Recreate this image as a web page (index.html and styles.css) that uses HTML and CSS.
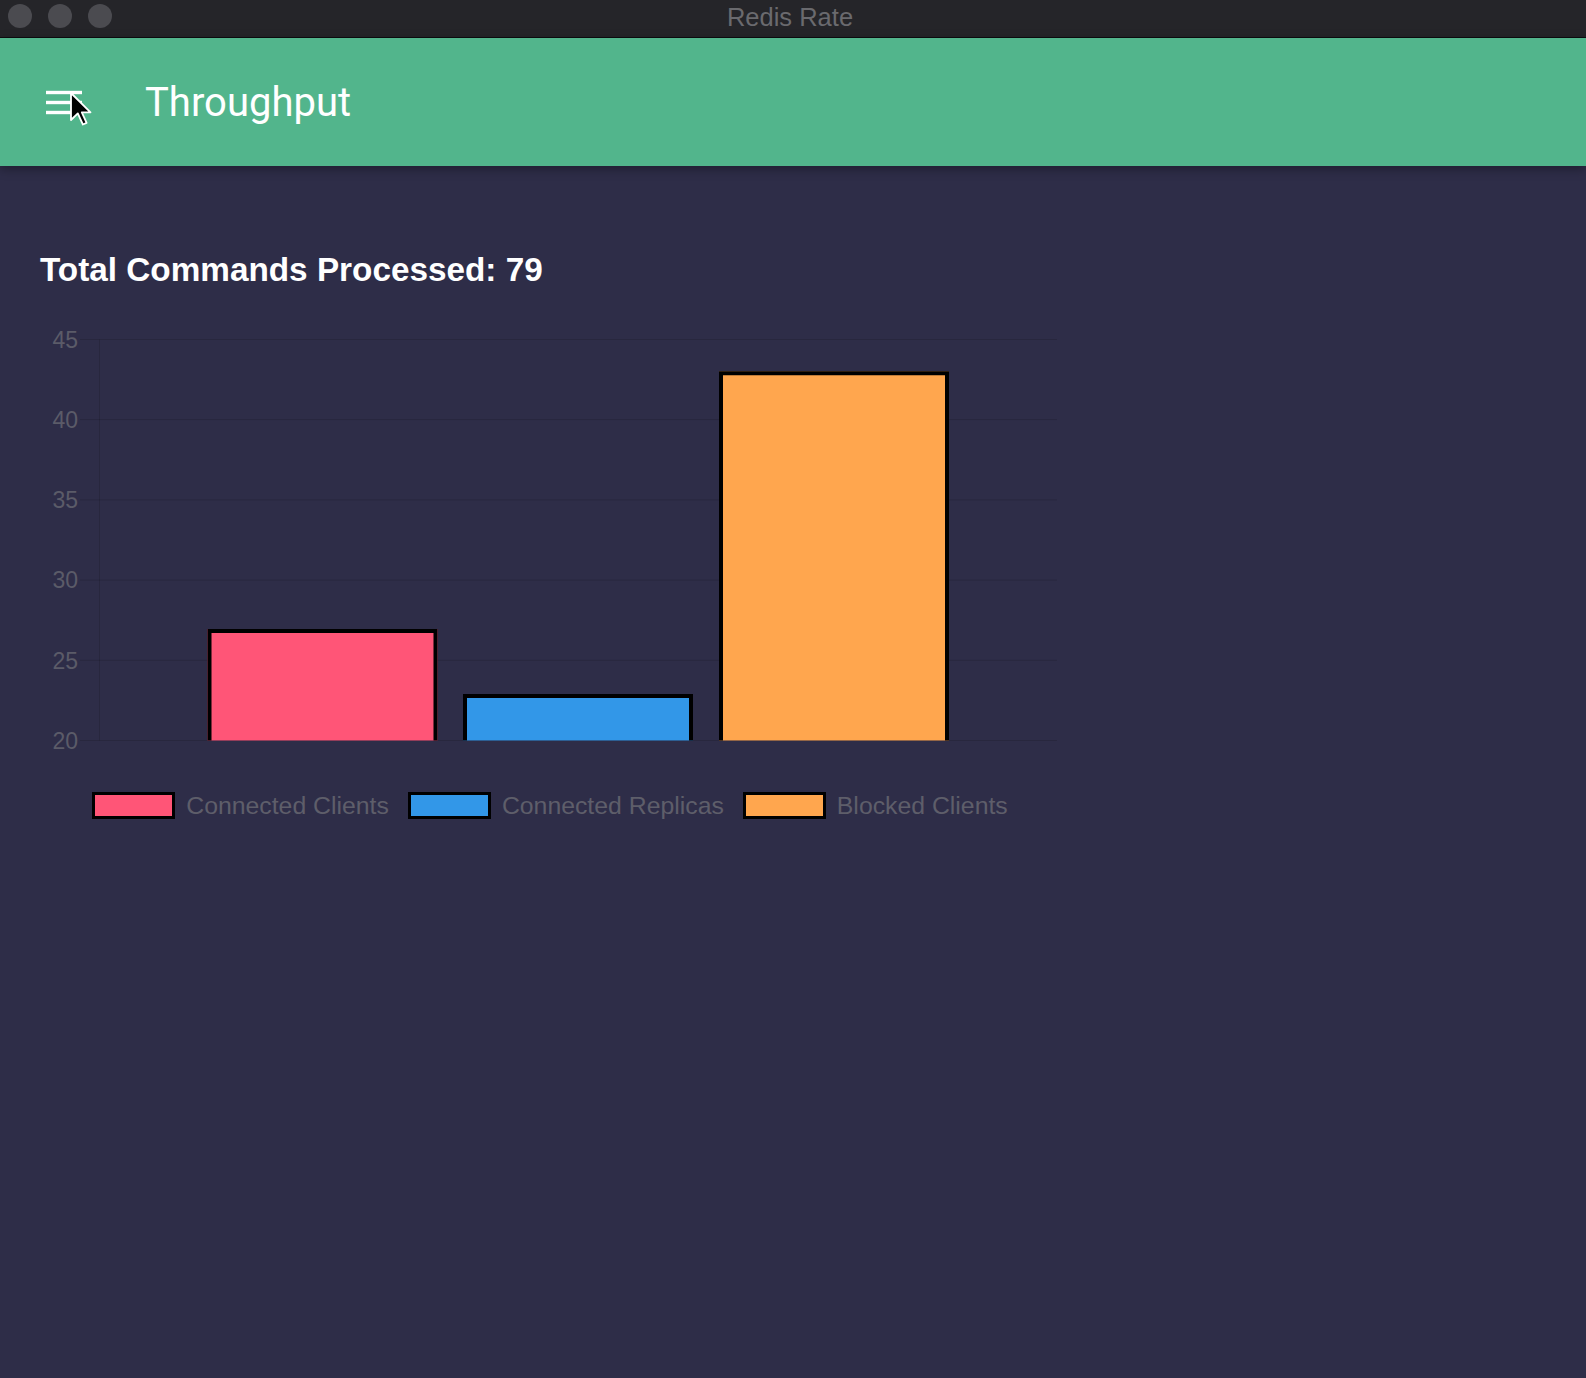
FILE: index.html
```html
<!DOCTYPE html>
<html lang="en">
<head>
<meta charset="utf-8">
<title>Redis Rate</title>
<link rel="stylesheet" href="styles.css">
</head>
<body>
<div class="window">
  <div class="titlebar">
    <div class="lights">
      <span class="light"></span><span class="light"></span><span class="light"></span>
    </div>
    <div class="wintitle">Redis Rate</div>
    <div class="spacer"></div>
  </div>
  <header class="appbar">
    <div class="menu-btn">
      <svg class="menu-icon" width="48" height="48" viewBox="0 0 48 48">
        <rect x="6" y="12.8" width="36" height="3.4" fill="#fff"/>
        <rect x="6" y="22.8" width="36" height="3.4" fill="#fff"/>
        <rect x="6" y="32.8" width="36" height="3.4" fill="#fff"/>
      </svg>
      <svg class="cursor" width="26" height="38" viewBox="0 0 26 38">
        <path d="M2 2 L2 29 L8.8 22.4 L13.9 33.5 L17.6 31.9 L12.8 21.3 L21.5 21.3 Z" fill="#000" stroke="#fff" stroke-width="1.8" stroke-linejoin="round"/>
      </svg>
    </div>
    <h1 class="apptitle">Throughput</h1>
  </header>
  <main class="content">
    <h2 class="total">Total Commands Processed: 79</h2>
    <div class="chart">
      <svg class="plot" width="1020" height="440" viewBox="0 0 1020 440">
        <g class="grid">
          <line x1="40" x2="1017" y1="20.5" y2="20.5"/>
          <line x1="40" x2="1017" y1="100.6" y2="100.6"/>
          <line x1="40" x2="1017" y1="180.9" y2="180.9"/>
          <line x1="40" x2="1017" y1="261.1" y2="261.1"/>
          <line x1="40" x2="1017" y1="341.3" y2="341.3"/>
          <line x1="40" x2="1017" y1="421.5" y2="421.5"/>
          <line x1="59.5" x2="59.5" y1="20.5" y2="421.5"/>
        </g>
        <g class="ticks">
          <text x="38" y="28.7">45</text>
          <text x="38" y="108.8">40</text>
          <text x="38" y="189.1">35</text>
          <text x="38" y="269.3">30</text>
          <text x="38" y="349.5">25</text>
          <text x="38" y="429.7">20</text>
        </g>
        <g class="bar">
          <rect x="167.5" y="310" width="230" height="111.5" fill="#ff5577"/>
          <path d="M169.5 421.5 V312 H395.5 V421.5"/>
        </g>
        <g class="bar">
          <rect x="423" y="375" width="230" height="46.5" fill="#3297e8"/>
          <path d="M425 421.5 V377 H651 V421.5"/>
        </g>
        <g class="bar">
          <rect x="679" y="52.3" width="230" height="369.2" fill="#ffa64e"/>
          <path d="M681 421.5 V54.3 H907 V421.5"/>
        </g>
      </svg>
      <div class="legend">
        <div class="legend-item"><span class="swatch swatch-pink"></span><span class="legend-label">Connected Clients</span></div>
        <div class="legend-item"><span class="swatch swatch-blue"></span><span class="legend-label">Connected Replicas</span></div>
        <div class="legend-item"><span class="swatch swatch-orange"></span><span class="legend-label">Blocked Clients</span></div>
      </div>
    </div>
  </main>
</div>
</body>
</html>
```

FILE: styles.css
```css
* { box-sizing: border-box; }
html, body { margin: 0; padding: 0; }
body {
  width: 1586px;
  height: 1378px;
  overflow: hidden;
  background: #2e2d48;
  font-family: "Liberation Sans", Arial, sans-serif;
}
.window {
  display: flex;
  flex-direction: column;
  min-height: 1378px;
}
.titlebar {
  height: 38px;
  background: #252529;
  border-bottom: 1px solid #0d0d10;
  display: grid;
  grid-template-columns: 1fr auto 1fr;
  align-items: start;
}
.lights {
  display: flex;
  gap: 16px;
  padding: 4px 0 0 8px;
}
.light {
  width: 24px;
  height: 24px;
  border-radius: 50%;
  background: #4b4b50;
}
.wintitle {
  font-size: 25.5px;
  line-height: 32px;
  color: #6a6a6e;
  padding: 1px 6px 0 0;
}
.appbar {
  height: 128px;
  background: #52b58c;
  display: flex;
  align-items: center;
  padding-left: 40px;
  box-shadow: 0 3px 10px rgba(0, 0, 0, 0.35);
  position: relative;
  z-index: 1;
}
.menu-btn {
  position: relative;
  width: 48px;
  height: 48px;
  margin-top: 0;
}
.menu-icon { display: block; }
.cursor {
  position: absolute;
  left: 29px;
  top: 13px;
}
.apptitle {
  margin: 1px 0 0 57px;
  font-family: Roboto, "Liberation Sans", sans-serif;
  font-weight: 400;
  font-size: 40px;
  line-height: 40px;
  color: #ffffff;
}
.content {
  padding: 84px 0 0 40px;
}
.total {
  margin: 0;
  font-size: 33.3px;
  line-height: 40px;
  font-weight: 700;
  color: #ffffff;
}
.chart {
  width: 1020px;
  margin-top: 29px;
}
.plot { display: block; }
.grid line {
  stroke: rgba(0, 0, 0, 0.13);
  stroke-width: 1;
}
.ticks text {
  font-family: "Liberation Sans", Arial, sans-serif;
  font-size: 23px;
  fill: #5b5b68;
  text-anchor: end;
}
.bar path {
  fill: none;
  stroke: #000;
  stroke-width: 4;
  stroke-linejoin: miter;
}
.legend {
  margin-top: 33px;
  display: flex;
  justify-content: center;
  align-items: center;
  gap: 19px;
}
.legend-item {
  display: flex;
  align-items: center;
  gap: 11px;
}
.swatch {
  width: 83px;
  height: 27px;
  border: 3px solid #000;
}
.swatch-pink { background: #ff5577; }
.swatch-blue { background: #3297e8; }
.swatch-orange { background: #ffa64e; }
.legend-label {
  font-size: 24.8px;
  line-height: 27px;
  color: #5e5e6a;
}
```
